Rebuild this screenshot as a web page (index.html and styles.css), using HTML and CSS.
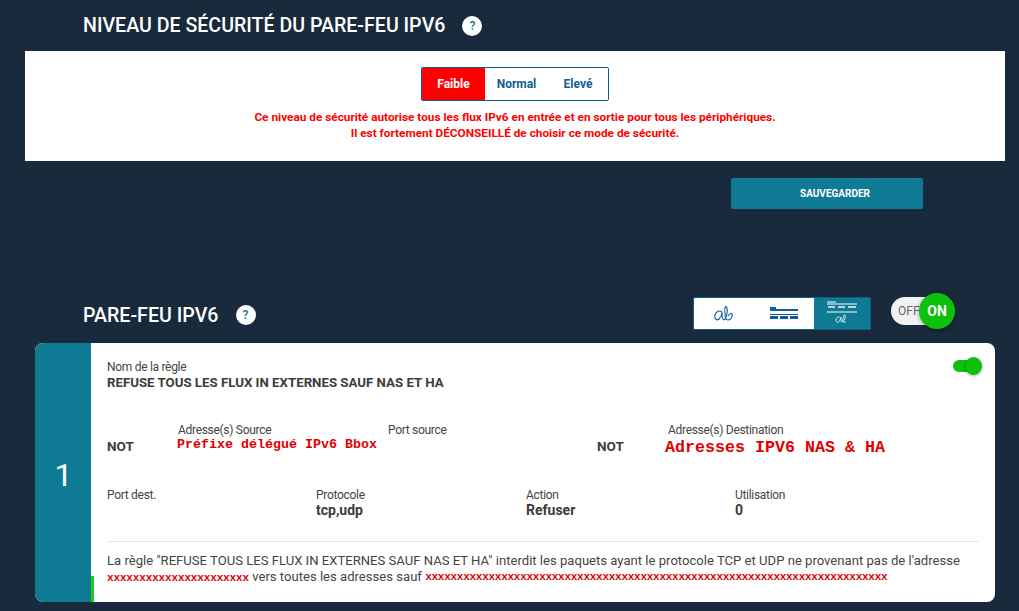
FILE: index.html
```html
<!DOCTYPE html>
<html lang="fr">
<head>
    <meta charset="UTF-8">
    <title>Pare-feu IPv6</title>
    <link rel="stylesheet" href="styles.css">
</head>
<body>
    <div class="section-title title-level">
        <h2>NIVEAU DE SÉCURITÉ DU PARE-FEU IPV6</h2>
        <span class="help">?</span>
    </div>

    <div class="level-panel">
        <div class="level-switch">
            <span class="level active">Faible</span>
            <span class="level">Normal</span>
            <span class="level">Elevé</span>
        </div>
        <p class="level-warning">Ce niveau de sécurité autorise tous les flux IPv6 en entrée et en sortie pour tous les périphériques.<br>Il est fortement DÉCONSEILLÉ de choisir ce mode de sécurité.</p>
    </div>

    <div class="save-row">
        <button class="save-btn">SAUVEGARDER</button>
    </div>

    <div class="firewall-head">
        <div class="section-title">
            <h2>PARE-FEU IPV6</h2>
            <span class="help">?</span>
        </div>
        <div class="view-switch">
            <span class="view">
                <svg width="20" height="17" viewBox="0 0 20 17" fill="none" stroke="#0f5f96" stroke-width="1.1">
                    <path d="M8 7C6 5 2 6 1 10C0 14 3 16 5 14C7 12 8 9 8 7C8 10 8 15 10 15"/>
                    <path d="M10 15C12 14 14 7 13 3C12 0 10 2 11 8C11 11 11 15 14 15C17 15 19 11 18 9C17 8 15 9 14 11"/>
                </svg>
            </span>
            <span class="view">
                <svg width="28" height="12" viewBox="0 0 28 12" fill="#0f5f96">
                    <rect x="0" y="0" width="6" height="2"/>
                    <rect x="0" y="2" width="28" height="2"/>
                    <rect x="0" y="7" width="28" height="1"/>
                    <rect x="0" y="9" width="8" height="3"/>
                    <rect x="10" y="9" width="8" height="3"/>
                    <rect x="20" y="9" width="8" height="3"/>
                </svg>
            </span>
            <span class="view active">
                <svg width="30" height="24" viewBox="0 0 30 24" fill="none" stroke="#fff">
                    <path d="M0 1H9M0 3H30" stroke-width="1"/>
                    <path d="M1 6H8M11 6H18M21 6H29" stroke-width="2" opacity=".7"/>
                    <path d="M0 11H30" stroke-width="1"/>
                    <path d="M14 17C12 15 9 16 9 19C9 22 12 22 13 19C14 17 14 16 14 17C14 19 14 21 15 21C17 21 19 16 18 14C17 13 16 16 16 19C16 21 17 22 19 21" stroke-width=".8"/>
                </svg>
            </span>
        </div>
        <div class="power-toggle">
            <span class="power-off">OFF</span>
            <span class="power-on">ON</span>
        </div>
    </div>

    <div class="rule-card">
        <div class="rule-index">1</div>
        <div class="rule-body">
            <span class="rule-switch"></span>
            <div class="rule-name">
                <div class="label">Nom de la règle</div>
                <div class="value">REFUSE TOUS LES FLUX IN EXTERNES SAUF NAS ET HA</div>
            </div>

            <div class="rule-addresses">
                <div class="value not">NOT</div>
                <div>
                    <div class="label">Adresse(s) Source</div>
                    <div class="mask mask-source">Préfixe délégué IPv6 Bbox</div>
                </div>
                <div class="label">Port source</div>
                <div class="value not">NOT</div>
                <div>
                    <div class="label">Adresse(s) Destination</div>
                    <div class="mask mask-dest">Adresses IPV6 NAS &amp; HA</div>
                </div>
            </div>

            <div class="rule-details">
                <div>
                    <div class="label">Port dest.</div>
                </div>
                <div>
                    <div class="label">Protocole</div>
                    <div class="value">tcp,udp</div>
                </div>
                <div>
                    <div class="label">Action</div>
                    <div class="value">Refuser</div>
                </div>
                <div>
                    <div class="label">Utilisation</div>
                    <div class="value">0</div>
                </div>
            </div>

            <p class="rule-summary">La règle "REFUSE TOUS LES FLUX IN EXTERNES SAUF NAS ET HA" interdit les paquets ayant le protocole TCP et UDP ne provenant pas de l'adresse<br><span class="mask-x">xxxxxxxxxxxxxxxxxxxxxx</span> vers toutes les adresses sauf <span class="mask-x x-long">xxxxxxxxxxxxxxxxxxxxxxxxxxxxxxxxxxxxxxxxxxxxxxxxxxxxxxxxxxxxxxxxxxxxxxxxx</span></p>
        </div>
    </div>
</body>
</html>
```

FILE: styles.css
```css
body {
    background-color: #182a3b;
    color: #3c3c3c;
    font-family: Roboto, sans-serif;
    font-size: 12px;
    margin: 0;
    height: 611px;
    overflow: hidden;
}

/* Section titles */
.section-title {
    display: flex;
    align-items: center;
    gap: 17px;
}

.section-title h2 {
    margin: 0;
    color: #fff;
    font-size: 19.6px;
    font-weight: 500;
}

.title-level {
    height: 51px;
    padding-left: 83px;
    box-sizing: border-box;
}

.help {
    width: 20px;
    height: 20px;
    border-radius: 50%;
    background-color: #fff;
    color: #0f7a93;
    font-size: 12px;
    font-weight: 500;
    display: flex;
    align-items: center;
    justify-content: center;
}

/* Security level */
.level-panel {
    margin-left: 25px;
    width: 980px;
    height: 110px;
    background-color: #fff;
    padding-top: 16px;
    box-sizing: border-box;
    text-align: center;
}

.level-switch {
    display: inline-grid;
    grid-template-columns: 63px 63px 60px;
    width: 188px;
    height: 34px;
    border: 1px solid #0f5f8c;
    border-radius: 2px;
    box-sizing: border-box;
    font-weight: 700;
    color: #0f5f96;
}

.level {
    display: flex;
    align-items: center;
    justify-content: center;
}

.level.active {
    background-color: #ff0000;
    color: #fff;
}

.level-warning {
    margin: 8px 0 0;
    color: #ff0000;
    font-weight: 700;
    font-size: 11.8px;
    line-height: 16px;
}

.save-row {
    height: 131px;
    padding: 17px 0 0 731px;
    box-sizing: border-box;
}

.save-btn {
    width: 192px;
    height: 31px;
    padding: 0 0 0 16px;
    border: none;
    border-radius: 2px;
    background-color: #0f7a93;
    color: #fff;
    font-family: inherit;
    font-size: 10px;
    font-weight: 700;
}

/* Firewall header */
.firewall-head {
    display: flex;
    align-items: center;
    height: 46px;
    padding: 0 73px 0 83px;
    box-sizing: border-box;
}

.view-switch {
    display: grid;
    grid-template-columns: 60px 60px 1fr;
    width: 178px;
    height: 33px;
    margin: -4px 0 0 auto;
    border: 1px solid #0f5f8c;
    border-radius: 2px;
    box-sizing: border-box;
    background-color: #fff;
}

.view {
    display: flex;
    align-items: center;
    justify-content: center;
}

.view.active {
    background-color: #0f7a93;
}

.power-toggle {
    position: relative;
    width: 55px;
    height: 28px;
    margin: -8px 0 0 20px;
    border-radius: 14px;
    background-color: #f2f2f2;
    color: #666;
    font-size: 12px;
    line-height: 28px;
}

.power-off {
    padding-left: 7px;
}

.power-on {
    position: absolute;
    top: -4px;
    right: -9px;
    width: 36px;
    height: 36px;
    border-radius: 50%;
    background-color: #0cc00c;
    color: #fff;
    font-weight: 700;
    font-size: 14px;
    line-height: 36px;
    text-align: center;
    box-shadow: 0 1px 4px rgba(0, 0, 0, 0.4);
}

/* Rule card */
.rule-card {
    display: flex;
    width: 960px;
    height: 259px;
    margin: 5px 0 0 35px;
    border-radius: 8px;
    background-color: #fff;
    overflow: hidden;
}

.rule-index {
    width: 56px;
    display: flex;
    align-items: center;
    justify-content: center;
    background-color: #0f7a93;
    color: #fff;
    font-size: 32px;
    padding: 5px 0 0 1px;
    box-sizing: border-box;
}

.rule-body {
    position: relative;
    flex: 1;
    padding: 18px 16px 0 13px;
    box-sizing: border-box;
    border-left: 3px solid transparent;
    border-image: linear-gradient(to bottom, #fff 232px, #19d119 232px) 1;
}

.label {
    font-size: 12px;
    line-height: 13px;
    letter-spacing: -0.3px;
    color: #444;
}

.value {
    font-size: 13.5px;
    line-height: 17px;
    font-weight: 700;
    color: #3c3c3c;
}

.rule-name .value {
    font-size: 13.25px;
}

.rule-switch {
    position: absolute;
    top: 17px;
    right: 16px;
    width: 26px;
    height: 12px;
    border-radius: 6px;
    background-color: #0cc00c;
}

.rule-switch::after {
    content: "";
    position: absolute;
    top: -3px;
    right: -3px;
    width: 17px;
    height: 18px;
    border-radius: 50%;
    background-color: #0cc00c;
    box-shadow: 0 1px 3px rgba(0, 0, 0, 0.35);
}

.rule-addresses {
    display: grid;
    grid-template-columns: 71px 210px 209px 71px 1fr;
    align-items: start;
    margin-top: 33px;
}

.not {
    margin-top: 14px;
}

.mask {
    font-family: "Liberation Mono", monospace;
    font-weight: 700;
    color: #e00000;
}

.mask-source {
    font-size: 13.33px;
    line-height: 14px;
    margin: 1px 0 0 -1px;
}

.mask-dest {
    font-size: 16.67px;
    line-height: 16px;
    margin: 3px 0 0 -3px;
}

.rule-details {
    display: grid;
    grid-template-columns: 209px 210px 209px 1fr;
    margin-top: 33px;
}

.rule-details .value {
    font-size: 14px;
}

.rule-summary {
    margin: 22px 0 0;
    padding-top: 11px;
    border-top: 1px solid #e6e6e6;
    font-size: 13.1px;
    line-height: 16px;
    color: #444;
    white-space: nowrap;
}

.mask-x {
    font-family: "Liberation Mono", monospace;
    font-weight: 700;
    font-size: 11px;
    letter-spacing: -0.15px;
    color: #e00000;
}

.x-long {
    letter-spacing: -0.27px;
    position: relative;
    top: -1px;
}
```
